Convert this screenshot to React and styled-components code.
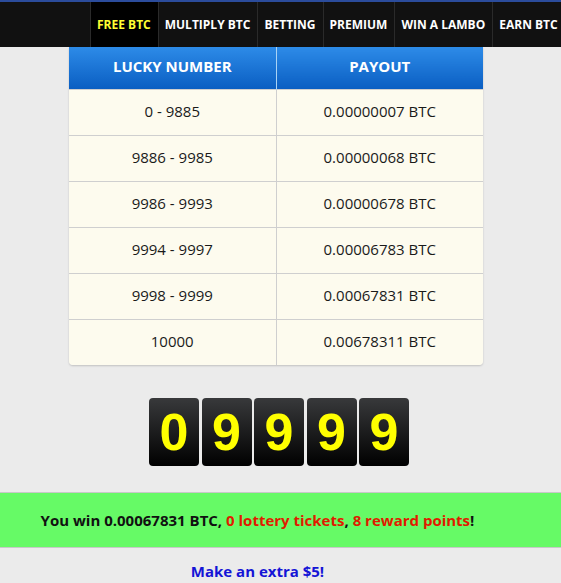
import React from "react";
import styled, { createGlobalStyle } from "styled-components";

const Global = createGlobalStyle`
  html, body { margin: 0; padding: 0; }
  body {
    background: #ebebeb;
    font-family: "Open Sans", "Liberation Sans", sans-serif;
    width: 561px;
    height: 583px;
    overflow: hidden;
  }
`;

const Nav = styled.nav`
  display: flex;
  height: 45px;
  background: #111111;
  border-top: 2px solid #2b4c9c;
  padding-left: 90px;
  overflow: hidden;
  white-space: nowrap;
`;

const NavItem = styled.a`
  display: flex;
  align-items: center;
  flex: none;
  padding: 0 7px 0 6px;
  border-left: 1px solid #2a2a2a;
  background: ${(p) => (p.$active ? "#000000" : "transparent")};
  color: ${(p) => (p.$active ? "#ffff33" : "#ffffff")};
  font-size: 12px;
  font-weight: 700;
  text-decoration: none;
`;

const TableWrap = styled.div`
  margin-left: 69px;
  width: 414px;
  border-radius: 0 0 4px 4px;
  box-shadow: 0 1px 2px rgba(0, 0, 0, 0.18);
  overflow: hidden;
`;

const Table = styled.table`
  width: 100%;
  border-collapse: collapse;
  table-layout: fixed;
`;

const HeadCell = styled.th`
  height: 42px;
  box-sizing: border-box;
  padding: 0 0 4px;
  background: linear-gradient(#2d8be8, #0a5ec2);
  color: #ffffff;
  font-size: 15px;
  font-weight: 700;
  border-left: ${(p) => (p.$first ? "none" : "1px solid #a9d3f5")};
`;

const Cell = styled.td`
  height: 46px;
  box-sizing: border-box;
  padding: 0 0 3px;
  text-align: center;
  background: #fdfbee;
  color: #1a1a1a;
  font-size: 15px;
  border-top: 1px solid #cfcfcf;
  border-left: ${(p) => (p.$first ? "none" : "1px solid #cfcfcf")};
`;

const Digits = styled.div`
  display: flex;
  justify-content: center;
  gap: 2.5px;
  margin-top: 33px;
  padding-right: 3px;
`;

const Digit = styled.div`
  width: 50px;
  height: 68px;
  border-radius: 4px;
  background: linear-gradient(#38393b, #000000);
  color: #ffff00;
  font-family: "Liberation Sans", Arial, sans-serif;
  font-weight: 700;
  font-size: 52px;
  display: flex;
  align-items: center;
  justify-content: center;
`;

const Banner = styled.div`
  margin-top: 26px;
  height: 54px;
  background: #66fa66;
  border-top: 1px solid #c8c8c8;
  border-bottom: 1px solid #c8c8c8;
  display: flex;
  align-items: center;
  justify-content: center;
  padding-right: 46px;
  font-size: 15px;
  font-weight: 700;
  color: #111111;
`;

const Red = styled.span`
  color: #e01b00;
`;

const Extra = styled.div`
  margin-top: 13px;
  padding-right: 46px;
  text-align: center;
  color: #1414d6;
  font-size: 15px;
  font-weight: 700;
`;

const rows = [
  ["0 - 9885", "0.00000007 BTC"],
  ["9886 - 9985", "0.00000068 BTC"],
  ["9986 - 9993", "0.00000678 BTC"],
  ["9994 - 9997", "0.00006783 BTC"],
  ["9998 - 9999", "0.00067831 BTC"],
  ["10000", "0.00678311 BTC"],
];

const nav = ["FREE BTC", "MULTIPLY BTC", "BETTING", "PREMIUM", "WIN A LAMBO", "EARN BTC"];

export default function App() {
  return (
    <>
      <Global />
      <Nav>
        {nav.map((n, i) => (
          <NavItem key={n} $active={i === 0} href="#">
            {n}
          </NavItem>
        ))}
      </Nav>
      <TableWrap>
        <Table>
          <thead>
            <tr>
              <HeadCell $first>LUCKY NUMBER</HeadCell>
              <HeadCell>PAYOUT</HeadCell>
            </tr>
          </thead>
          <tbody>
            {rows.map(([a, b]) => (
              <tr key={a}>
                <Cell $first>{a}</Cell>
                <Cell>{b}</Cell>
              </tr>
            ))}
          </tbody>
        </Table>
      </TableWrap>
      <Digits>
        {["0", "9", "9", "9", "9"].map((d, i) => (
          <Digit key={i}>{d}</Digit>
        ))}
      </Digits>
      <Banner>
        You win 0.00067831 BTC,&nbsp;<Red>0 lottery tickets</Red>,&nbsp;
        <Red>8 reward points</Red>!
      </Banner>
      <Extra>Make an extra $5!</Extra>
    </>
  );
}
